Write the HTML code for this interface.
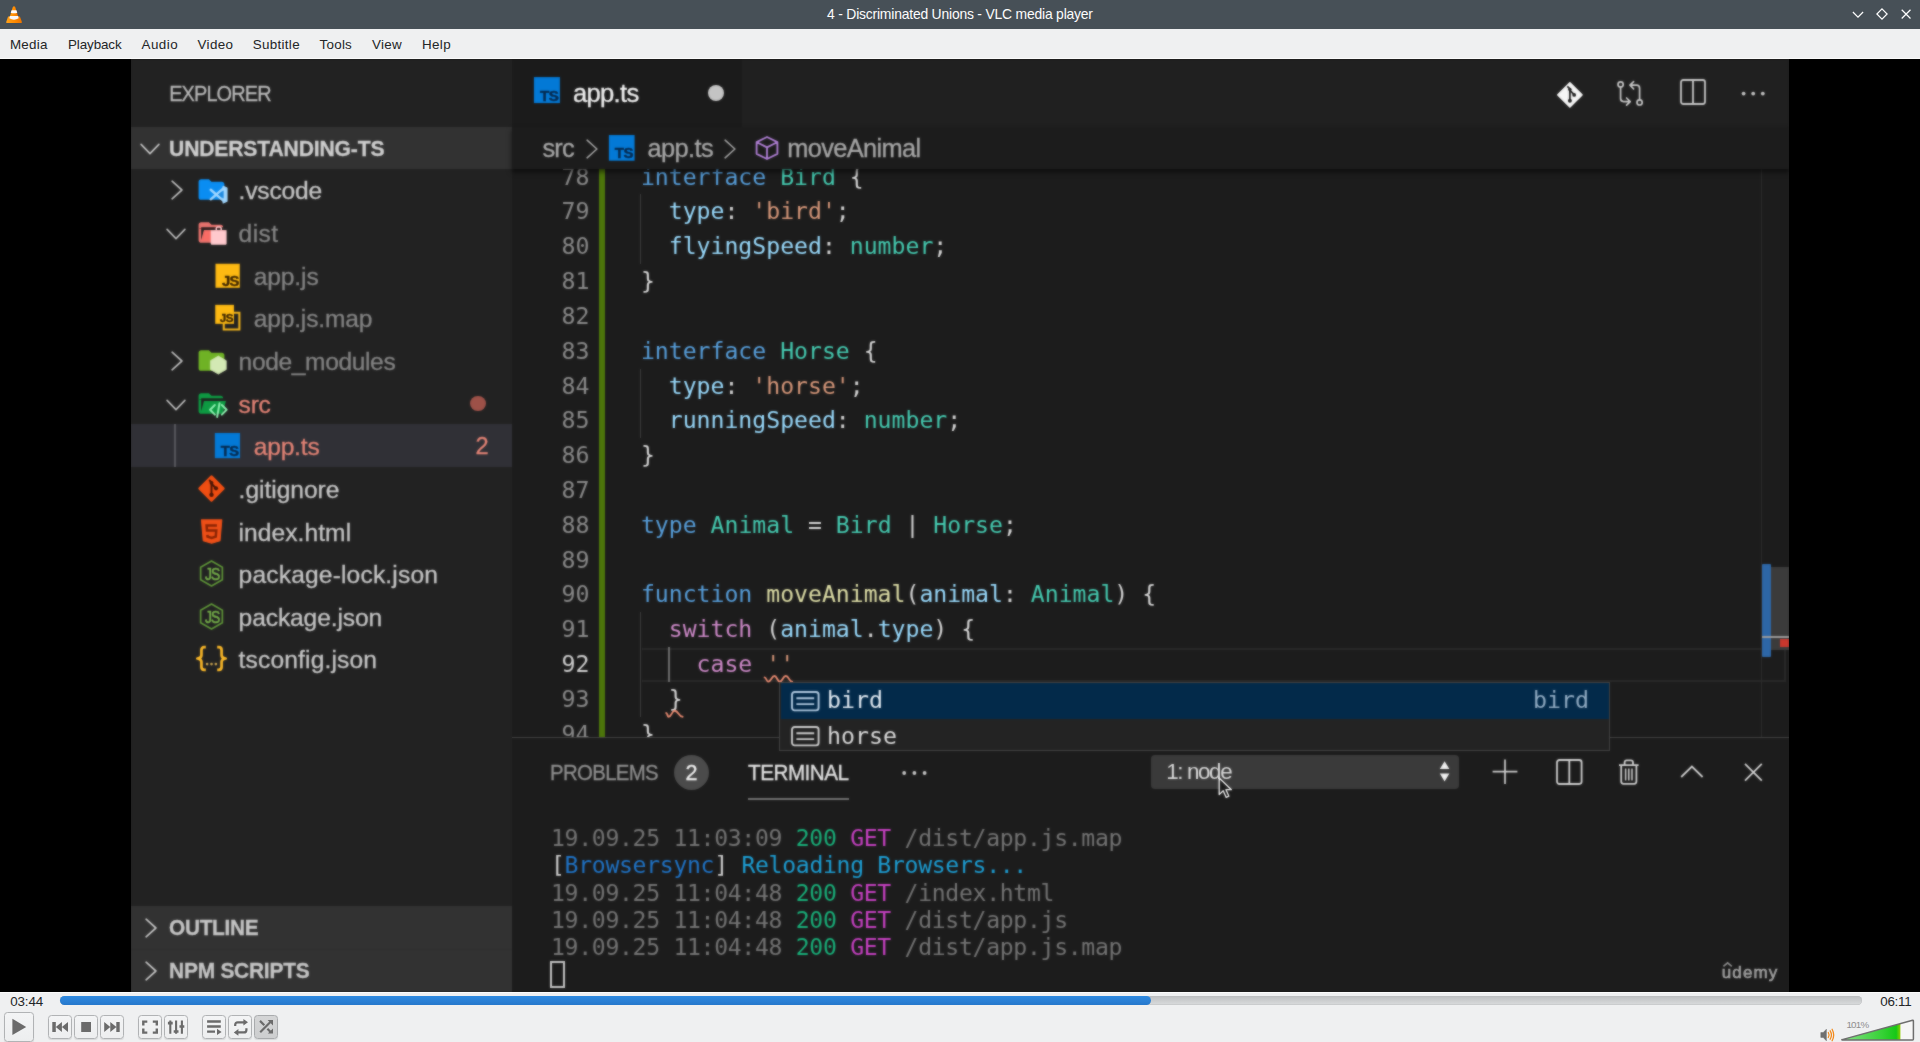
<!DOCTYPE html>
<html lang="en">
<head>
<meta charset="utf-8">
<title>4 - Discriminated Unions - VLC media player</title>
<style>
html,body{margin:0;padding:0}
body{width:1920px;height:1042px;overflow:hidden;background:#eff0f1;position:relative;font-family:"Liberation Sans",sans-serif}
.t{position:absolute;white-space:pre;display:block}
.ls{font-family:"Liberation Sans",sans-serif}
.dm{font-family:"DejaVu Sans Mono","Liberation Mono",monospace}
.ds{font-family:"DejaVu Sans","Liberation Sans",sans-serif}
svg{overflow:visible}
#vscode{filter:url(#vblur)}
#vscode .ls{-webkit-text-stroke:.3px}
.tl{position:absolute;left:551px;height:27.2px;line-height:27.2px;font-family:"DejaVu Sans Mono","Liberation Mono",monospace;font-size:23.1px;letter-spacing:-0.306px;white-space:pre}
.ln{position:absolute;left:0;width:1277px;height:34.82px;line-height:34.82px;font-family:"DejaVu Sans Mono","Liberation Mono",monospace;font-size:23.13px;white-space:pre;padding-left:128.9px;box-sizing:border-box}
.ln .no{position:absolute;left:0;width:77.4px;text-align:right;font-size:23.26px}
</style>
</head>
<body>
<svg width="0" height="0" style="position:absolute" aria-hidden="true"><filter id="vblur" x="0" y="0" width="100%" height="100%" color-interpolation-filters="sRGB"><feGaussianBlur stdDeviation="0.9" result="b"/><feComposite in="b" in2="SourceGraphic" operator="arithmetic" k1="0" k2="0.6" k3="0.4" k4="0"/></filter></svg>
<div id="titlebar" style="position:absolute;left:0;top:0;width:1920px;height:29px;background:#475057"></div>
<svg style="position:absolute;left:6px;top:5.5px;" width="16" height="17" viewBox="0 0 16 17"><defs><linearGradient id="cg" x1="0" x2="1"><stop offset="0" stop-color="#ffa21a"/><stop offset=".55" stop-color="#ff8a00"/><stop offset="1" stop-color="#ea7200"/></linearGradient></defs>
<path d="M2.1 10.5 L13.9 10.5 L15.9 16.1 Q16.1 17 15.2 17 L0.9 17 Q0 17 0.2 16.1Z" fill="url(#cg)"/>
<path d="M6.8 0.9 Q8 -0.3 9.2 0.9 L12.6 12 Q8 14.8 3.4 12Z" fill="url(#cg)"/>
<path d="M5.6 4.2 L10.4 4.2 L11.3 6.8 Q8 7.8 4.7 6.8Z" fill="#fbfbfb"/>
<path d="M3.9 9.9 L12.1 9.9 L12.7 12.3 Q8 15.2 3.3 12.3Z" fill="#f7f7f7"/></svg>
<span class="t ls" style="left:827.00px;top:5.48px;font-size:13.9px;line-height:18px;color:#fcfcfc;letter-spacing:-0.192px;">4 - Discriminated Unions - VLC media player</span>
<svg style="position:absolute;left:1848px;top:4px;" width="20" height="20" viewBox="0 0 20 20"><path d="M4.9 8 L10 13.1 L15.1 8" fill="none" stroke="#fcfcfc" stroke-width="1.25"/></svg>
<svg style="position:absolute;left:1872px;top:4px;" width="20" height="20" viewBox="0 0 20 20"><path d="M10 4.9 L15.1 10 L10 15.1 L4.9 10Z" fill="none" stroke="#fcfcfc" stroke-width="1.25"/></svg>
<svg style="position:absolute;left:1896px;top:4px;" width="20" height="20" viewBox="0 0 20 20"><path d="M5.7 5.7 L14.5 14.5 M14.5 5.7 L5.7 14.5" fill="none" stroke="#fcfcfc" stroke-width="1.25"/></svg>
<div id="menubar" style="position:absolute;left:0;top:29px;width:1920px;height:30px;background:#eff0f1;border-bottom:1px solid #fafafa;box-sizing:border-box"></div>
<span class="t ls" style="left:9.90px;top:35.96px;font-size:13.4px;line-height:17px;color:#232627;letter-spacing:0.282px;">Media</span>
<span class="t ls" style="left:68.00px;top:35.96px;font-size:13.4px;line-height:17px;color:#232627;letter-spacing:-0.105px;">Playback</span>
<span class="t ls" style="left:141.60px;top:35.96px;font-size:13.4px;line-height:17px;color:#232627;letter-spacing:0.438px;">Audio</span>
<span class="t ls" style="left:197.60px;top:35.96px;font-size:13.4px;line-height:17px;color:#232627;letter-spacing:0.323px;">Video</span>
<span class="t ls" style="left:252.70px;top:35.96px;font-size:13.4px;line-height:17px;color:#232627;letter-spacing:0.319px;">Subtitle</span>
<span class="t ls" style="left:319.60px;top:35.96px;font-size:13.4px;line-height:17px;color:#232627;letter-spacing:0.235px;">Tools</span>
<span class="t ls" style="left:371.90px;top:35.96px;font-size:13.4px;line-height:17px;color:#232627;letter-spacing:0.306px;">View</span>
<span class="t ls" style="left:422.00px;top:35.96px;font-size:13.4px;line-height:17px;color:#232627;letter-spacing:0.353px;">Help</span>
<div id="video" style="position:absolute;left:0;top:59px;width:1920px;height:933px;background:#000"></div>
<div id="vscode-clip" style="position:absolute;left:131px;top:59px;width:1658px;height:933px;overflow:hidden;background:#1c1c1c"><div id="vscode" style="position:absolute;left:-131px;top:-59px;width:1920px;height:1042px">
<div id="editor-bg" style="position:absolute;left:512px;top:59px;width:1277px;height:933px;background:#1c1c1c"></div>
<div id="sidebar" style="position:absolute;left:131px;top:59px;width:381px;height:933px;background:#222222"></div>
<span class="t ls" style="left:168.80px;top:78.64px;font-size:22.4px;line-height:29px;color:#b9b9b9;letter-spacing:-0.977px;transform-origin:1.50px 50%;transform:scaleX(0.8896);">EXPLORER</span>
<div style="position:absolute;left:131px;top:127px;width:381px;height:42px;background:#323232;"></div>
<svg style="position:absolute;left:138.4px;top:137.2px;" width="24" height="24" viewBox="0 0 24 24"><path d="M3.10 7.40 L12 16.60 L20.90 7.40" fill="none" stroke="#c2c2c2" stroke-width="1.7" stroke-linecap="round" stroke-linejoin="round"/></svg>
<span class="t ls" style="left:168.90px;top:134.92px;font-size:21.6px;line-height:28px;color:#cfcfcf;font-weight:700;letter-spacing:-0.169px;transform-origin:1.40px 50%;transform:scaleX(0.9787);">UNDERSTANDING-TS</span>
<div style="position:absolute;left:131px;top:424.2px;width:381px;height:42.8px;background:#303036;"></div>
<div style="position:absolute;left:173.6px;top:424.2px;width:2.2px;height:42.8px;background:#56565c;"></div>
<svg style="position:absolute;left:164.6px;top:178.32px;" width="24" height="24" viewBox="0 0 24 24"><path d="M7.10 3.20 L16.90 12 L7.10 20.80" fill="none" stroke="#b8b8b8" stroke-width="1.7" stroke-linecap="round" stroke-linejoin="round"/></svg>
<svg style="position:absolute;left:196.1px;top:174.42px;" width="31.0" height="31.0" viewBox="0 0 24 24"><path d="M10 4H4c-1.11 0-2 .89-2 2v12a2 2 0 0 0 2 2h16a2 2 0 0 0 2-2V8c0-1.11-.9-2-2-2h-8l-2-2z" fill="#0a8df2"/><path d="M11.4 12.2 L21.6 21 M11.4 19.6 L21.6 10.8" fill="none" stroke="#9fd6ff" stroke-width="1.9" stroke-linecap="round"/><path d="M21 9.6 L24 10.8 V21 L21 22.4 Z" fill="#9fd6ff" stroke="#9fd6ff" stroke-width=".9" stroke-linejoin="round"/><path d="M21.4 12.8 L17 15.9 L21.4 19Z" fill="#1f8ae0"/></svg>
<span class="t ls" style="left:238.60px;top:175.40px;font-size:24.6px;line-height:32px;color:#c8c8c8;letter-spacing:-0.210px;">.vscode</span>
<svg style="position:absolute;left:163.6px;top:222.16px;" width="24" height="24" viewBox="0 0 24 24"><path d="M3.10 7.40 L12 16.60 L20.90 7.40" fill="none" stroke="#b8b8b8" stroke-width="1.7" stroke-linecap="round" stroke-linejoin="round"/></svg>
<svg style="position:absolute;left:196.1px;top:217.06px;" width="31.0" height="31.0" viewBox="0 0 24 24"><path d="M19 20H4c-1.11 0-2-.9-2-2V6c0-1.11.89-2 2-2h6l2 2h7a2 2 0 0 1 2 2H4v10l2.14-8h17.07l-2.28 8.5c-.23.87-1.01 1.5-1.93 1.5z" fill="#e8726d"/><path d="M2.6 9.2 H19.6 V8.6 H2.6Z" fill="#5a1010" opacity=".55"/><path d="M4.2 18.2 L6.2 10.4 H14 V18.2Z" fill="#ff6a62" opacity=".7"/><path d="M11.4 10.2 h12.3 v10.6 a.6 .6 0 0 1 -.6 .6 h-11.1 a.6 .6 0 0 1 -.6 -.6z" fill="#ffc9cd"/><path d="M15.7 10.4 v-1.5 a1.1 1.1 0 0 1 1.1 -1.1 h1.6 a1.1 1.1 0 0 1 1.1 1.1 v1.5" fill="none" stroke="#ffc9cd" stroke-width="1.2"/></svg>
<span class="t ls" style="left:238.60px;top:218.04px;font-size:24.6px;line-height:32px;color:#858585;letter-spacing:0.376px;">dist</span>
<svg style="position:absolute;left:211.5px;top:259.7px;" width="31.0" height="31.0" viewBox="0 0 24 24"><rect x="2.7" y="2.9" width="18.8" height="18.6" fill="#fdb912"/><text x="20.6" y="20" text-anchor="end" font-family="Liberation Sans, sans-serif" font-weight="700" font-size="11.4" fill="#3a2300" stroke="#3a2300" stroke-width=".3" letter-spacing="-.5">JS</text></svg>
<span class="t ls" style="left:253.70px;top:260.68px;font-size:24.6px;line-height:32px;color:#858585;letter-spacing:-0.125px;">app.js</span>
<svg style="position:absolute;left:211.5px;top:302.34px;" width="31.0" height="31.0" viewBox="0 0 24 24"><path d="M12 8.3 H21.2 V21.3 H9.1 V14" fill="none" stroke="#f3b51a" stroke-width="1.6"/><rect x="2.5" y="2.2" width="14.5" height="14.7" fill="#fdb912"/><text x="16.2" y="15.4" text-anchor="end" font-family="Liberation Sans, sans-serif" font-weight="700" font-size="9" fill="#3a2300" stroke="#3a2300" stroke-width=".25" letter-spacing="-.4">JS</text></svg>
<span class="t ls" style="left:253.70px;top:303.32px;font-size:24.6px;line-height:32px;color:#858585;letter-spacing:-0.178px;">app.js.map</span>
<svg style="position:absolute;left:164.6px;top:348.88px;" width="24" height="24" viewBox="0 0 24 24"><path d="M7.10 3.20 L16.90 12 L7.10 20.80" fill="none" stroke="#b8b8b8" stroke-width="1.7" stroke-linecap="round" stroke-linejoin="round"/></svg>
<svg style="position:absolute;left:196.1px;top:344.98px;" width="31.0" height="31.0" viewBox="0 0 24 24"><path d="M10 4H4c-1.11 0-2 .89-2 2v12a2 2 0 0 0 2 2h16a2 2 0 0 0 2-2V8c0-1.11-.9-2-2-2h-8l-2-2z" fill="#6fb225"/><path d="M17.3 8.6 L23.4 12.1 V19 L17.3 22.5 L11.2 19 V12.1Z" fill="#d3e9b4" stroke="#d3e9b4" stroke-width=".6" stroke-linejoin="round"/></svg>
<span class="t ls" style="left:238.60px;top:345.96px;font-size:24.6px;line-height:32px;color:#858585;letter-spacing:-0.386px;">node_modules</span>
<svg style="position:absolute;left:163.6px;top:392.71999999999997px;" width="24" height="24" viewBox="0 0 24 24"><path d="M3.10 7.40 L12 16.60 L20.90 7.40" fill="none" stroke="#b8b8b8" stroke-width="1.7" stroke-linecap="round" stroke-linejoin="round"/></svg>
<svg style="position:absolute;left:196.1px;top:387.62px;" width="31.0" height="31.0" viewBox="0 0 24 24"><path d="M19 20H4c-1.11 0-2-.9-2-2V6c0-1.11.89-2 2-2h6l2 2h7a2 2 0 0 1 2 2H4v10l2.14-8h17.07l-2.28 8.5c-.23.87-1.01 1.5-1.93 1.5z" fill="#0d9a42"/><path d="M2.6 9.2 H19.6 V8.6 H2.6Z" fill="#033b16" opacity=".6"/><path d="M14.6 13.2 L10.9 16.9 L14.6 20.6 M20 13.2 L23.7 16.9 L20 20.6 M18.2 11.8 L16.4 22.4" fill="none" stroke="#8df0b0" stroke-width="1.55" stroke-linecap="round" stroke-linejoin="round"/></svg>
<span class="t ls" style="left:238.60px;top:388.60px;font-size:24.6px;line-height:32px;color:#e58476;letter-spacing:-0.242px;">src</span>
<svg style="position:absolute;left:211.5px;top:430.26px;" width="31.0" height="31.0" viewBox="0 0 24 24"><rect x="2.2" y="2.3" width="19.5" height="19.5" fill="#0379d6"/><text x="20.7" y="19.9" text-anchor="end" font-family="Liberation Sans, sans-serif" font-weight="700" font-size="11.4" fill="#06294d" stroke="#06294d" stroke-width=".35" letter-spacing="-.3">TS</text></svg>
<span class="t ls" style="left:253.70px;top:431.24px;font-size:24.6px;line-height:32px;color:#e58476;letter-spacing:-0.199px;">app.ts</span>
<svg style="position:absolute;left:196.1px;top:472.9px;" width="31.0" height="31.0" viewBox="0 0 24 24"><path d="M12 2.9 L21.1 12 L12 21.1 L2.9 12Z" fill="#f04e12" stroke="#f04e12" stroke-width="2.2" stroke-linejoin="round"/><path d="M10.2 5.4 L12 7.2 V16.4 M12.2 8.4 L15 11.4" fill="none" stroke="#4a1505" stroke-width="1.5"/><circle cx="12" cy="16.9" r="1.7" fill="#4a1505"/><circle cx="15.5" cy="11.9" r="1.6" fill="#4a1505"/><circle cx="12" cy="7.6" r="1.5" fill="#4a1505"/></svg>
<span class="t ls" style="left:238.60px;top:473.88px;font-size:24.6px;line-height:32px;color:#c8c8c8;letter-spacing:-0.041px;">.gitignore</span>
<svg style="position:absolute;left:196.1px;top:515.54px;" width="31.0" height="31.0" viewBox="0 0 24 24"><path d="M4.2 3 H20 L18.6 19.2 L12.1 21.1 L5.6 19.2Z" fill="#ee4f17" stroke="#ee4f17" stroke-width=".8" stroke-linejoin="round"/><path d="M16.2 7.4 H8.2 L8.5 11.3 H15.7 L15.3 16 L12.1 17 L8.9 16 L8.8 14.6" fill="none" stroke="#8a2404" stroke-width="1.9"/></svg>
<span class="t ls" style="left:238.60px;top:516.52px;font-size:24.6px;line-height:32px;color:#c8c8c8;letter-spacing:0.046px;">index.html</span>
<svg style="position:absolute;left:196.1px;top:558.18px;" width="31.0" height="31.0" viewBox="0 0 24 24"><path d="M12 2.4 L20.4 7.2 V16.8 L12 21.6 L3.6 16.8 V7.2Z" fill="none" stroke="#5f9638" stroke-width="1.3" stroke-linejoin="round"/><text transform="translate(12.5 17) scale(.84 1)" text-anchor="middle" font-family="Liberation Sans, sans-serif" font-weight="400" font-size="12.8" fill="#76b04a" letter-spacing="-.9" stroke="#76b04a" stroke-width=".45">JS</text></svg>
<span class="t ls" style="left:238.60px;top:559.16px;font-size:24.6px;line-height:32px;color:#c8c8c8;letter-spacing:0.153px;">package-lock.json</span>
<svg style="position:absolute;left:196.1px;top:600.82px;" width="31.0" height="31.0" viewBox="0 0 24 24"><path d="M12 2.4 L20.4 7.2 V16.8 L12 21.6 L3.6 16.8 V7.2Z" fill="none" stroke="#5f9638" stroke-width="1.3" stroke-linejoin="round"/><text transform="translate(12.5 17) scale(.84 1)" text-anchor="middle" font-family="Liberation Sans, sans-serif" font-weight="400" font-size="12.8" fill="#76b04a" letter-spacing="-.9" stroke="#76b04a" stroke-width=".45">JS</text></svg>
<span class="t ls" style="left:238.60px;top:601.80px;font-size:24.6px;line-height:32px;color:#c8c8c8;letter-spacing:-0.121px;">package.json</span>
<svg style="position:absolute;left:196.1px;top:643.46px;" width="31.0" height="31.0" viewBox="0 0 24 24"><path d="M7.6 3.2 H6.4 Q4.2 3.2 4.2 5.4 V9.4 Q4.2 11.6 1 12 Q4.2 12.4 4.2 14.6 V18.6 Q4.2 20.8 6.4 20.8 H7.6" fill="none" stroke="#fbb827" stroke-width="2.1" stroke-linejoin="round"/><path d="M16.4 3.2 H17.6 Q19.8 3.2 19.8 5.4 V9.4 Q19.8 11.6 23 12 Q19.8 12.4 19.8 14.6 V18.6 Q19.8 20.8 17.6 20.8 H16.4" fill="none" stroke="#fbb827" stroke-width="2.1" stroke-linejoin="round"/><circle cx="8.6" cy="16.3" r="1.05" fill="#d0a850"/><circle cx="12" cy="16.3" r="1.05" fill="#d0a850"/><circle cx="15.4" cy="16.3" r="1.05" fill="#d0a850"/></svg>
<span class="t ls" style="left:238.60px;top:644.44px;font-size:24.6px;line-height:32px;color:#c8c8c8;letter-spacing:0.141px;">tsconfig.json</span>
<div style="position:absolute;left:470.3px;top:395.8px;width:15.6px;height:15.6px;border-radius:50%;background:#9d5148"></div>
<span class="t ls" style="left:475.40px;top:430.88px;font-size:23.6px;line-height:31px;color:#e58476;">2</span>
<div style="position:absolute;left:131px;top:906px;width:381px;height:86px;background:#323232;"></div>
<div style="position:absolute;left:131px;top:948.8px;width:381px;height:1px;background:#2f2f2f;"></div>
<svg style="position:absolute;left:139.4px;top:916.2px;" width="24" height="24" viewBox="0 0 24 24"><path d="M7.10 3.20 L16.90 12 L7.10 20.80" fill="none" stroke="#c2c2c2" stroke-width="1.7" stroke-linecap="round" stroke-linejoin="round"/></svg>
<span class="t ls" style="left:168.90px;top:914.12px;font-size:21.6px;line-height:28px;color:#c6c6c6;font-weight:700;letter-spacing:-0.301px;transform-origin:1.40px 50%;transform:scaleX(0.9639);">OUTLINE</span>
<svg style="position:absolute;left:139.4px;top:959.3px;" width="24" height="24" viewBox="0 0 24 24"><path d="M7.10 3.20 L16.90 12 L7.10 20.80" fill="none" stroke="#c2c2c2" stroke-width="1.7" stroke-linecap="round" stroke-linejoin="round"/></svg>
<span class="t ls" style="left:168.90px;top:957.32px;font-size:21.6px;line-height:28px;color:#c6c6c6;font-weight:700;letter-spacing:-0.244px;transform-origin:1.40px 50%;transform:scaleX(0.9688);">NPM SCRIPTS</span>
<div id="tabs" style="position:absolute;left:512px;top:59px;width:1277px;height:68px;background:#202020"></div>
<div id="tab-active" style="position:absolute;left:512px;top:59px;width:230.4px;height:68px;background:#1b1b1b"></div>
<svg style="position:absolute;left:530.6px;top:74.4px;" width="32" height="32" viewBox="0 0 24 24"><rect x="2.2" y="2.3" width="19.5" height="19.5" fill="#0379d6"/><text x="20.7" y="19.9" text-anchor="end" font-family="Liberation Sans, sans-serif" font-weight="700" font-size="11.4" fill="#06294d" stroke="#06294d" stroke-width=".35" letter-spacing="-.3">TS</text></svg>
<span class="t ls" style="left:573.00px;top:76.53px;font-size:25.6px;line-height:33px;color:#f2f2f2;letter-spacing:-0.704px;">app.ts</span>
<div style="position:absolute;left:707.5px;top:84.9px;width:16.2px;height:16.2px;border-radius:50%;background:#c4c4c4"></div>
<svg style="position:absolute;left:1556.4px;top:81.2px;" width="27.8" height="27.8" viewBox="0 0 24 24"><path d="M12 1.6 L22.4 12 L12 22.4 L1.6 12Z" fill="#f6f6f6" stroke="#f6f6f6" stroke-width="1.4" stroke-linejoin="round"/><path d="M9.8 4.6 L12 6.8 V16.4 M12.2 8.2 L15.2 11.4" fill="none" stroke="#1c1c1c" stroke-width="1.5"/><circle cx="12" cy="17" r="1.7" fill="#1c1c1c"/><circle cx="15.7" cy="12" r="1.6" fill="#1c1c1c"/><circle cx="12" cy="7.4" r="1.5" fill="#1c1c1c"/></svg>
<svg style="position:absolute;left:1616.6px;top:79.6px;" width="26.2" height="27" viewBox="0 0 26.2 27"><circle cx="3.6" cy="4.4" r="2.6" fill="none" stroke="#c8c8c8" stroke-width="1.7"/><circle cx="22.6" cy="22.4" r="2.6" fill="none" stroke="#c8c8c8" stroke-width="1.7"/><path d="M3.6 7.2 V18.6 Q3.6 21.6 6.6 21.6 H12.6 M9.6 18 L13.2 21.6 L9.6 25.2" fill="none" stroke="#c8c8c8" stroke-width="1.7" stroke-linejoin="round" stroke-linecap="round"/><path d="M22.6 19.6 V8.2 Q22.6 5.2 19.6 5.2 H13.6 M16.6 1.6 L13 5.2 L16.6 8.8" fill="none" stroke="#c8c8c8" stroke-width="1.7" stroke-linejoin="round" stroke-linecap="round"/></svg>
<svg style="position:absolute;left:1680px;top:79.2px;" width="26" height="26" viewBox="0 0 26 26"><rect x="1" y="1" width="24" height="24" rx="2.2" fill="none" stroke="#c8c8c8" stroke-width="1.8"/><path d="M13 1 V25" stroke="#c8c8c8" stroke-width="1.8"/></svg>
<svg style="position:absolute;left:1741px;top:90px;" width="26" height="8" viewBox="0 0 26 8"><circle cx="2.6" cy="3.6" r="1.9" fill="#c8c8c8"/><circle cx="12.2" cy="3.6" r="1.9" fill="#c8c8c8"/><circle cx="21.8" cy="3.6" r="1.9" fill="#c8c8c8"/></svg>
<div id="code" style="position:absolute;left:512px;top:127px;width:1277px;height:610px;overflow:hidden;background:#1c1c1c">
<div style="position:absolute;left:130px;top:521px;width:1144px;height:34px;box-sizing:border-box;border:2px solid #282828;border-left:0"></div>
<div style="position:absolute;left:128.20000000000005px;top:67.4px;width:1.3px;height:69.64px;background:#3c3c3c"></div>
<div style="position:absolute;left:128.20000000000005px;top:241.5px;width:1.3px;height:69.64px;background:#3c3c3c"></div>
<div style="position:absolute;left:128.20000000000005px;top:485.24px;width:1.3px;height:104.46000000000001px;background:#3c3c3c"></div>
<div style="position:absolute;left:155.60000000000002px;top:520.0600000000001px;width:2px;height:34.82px;background:#6c6c6c"></div>
<div style="position:absolute;left:87px;top:42px;width:6.3px;height:570px;background:#4c750a"></div>
<div class="ln" style="top:32.58px"><span class="no" style="color:#8a8a8a">78</span><span style="color:#579fdc">interface</span><span style="color:#d8d8d8"> </span><span style="color:#45ccb2">Bird</span><span style="color:#d8d8d8"> {</span></div>
<div class="ln" style="top:67.40px"><span class="no" style="color:#8a8a8a">79</span><span style="color:#d8d8d8">  </span><span style="color:#9adcff">type</span><span style="color:#d8d8d8">: </span><span style="color:#d8987a">&#x27;bird&#x27;</span><span style="color:#d8d8d8">;</span></div>
<div class="ln" style="top:102.22px"><span class="no" style="color:#8a8a8a">80</span><span style="color:#d8d8d8">  </span><span style="color:#9adcff">flyingSpeed</span><span style="color:#d8d8d8">: </span><span style="color:#45ccb2">number</span><span style="color:#d8d8d8">;</span></div>
<div class="ln" style="top:137.04px"><span class="no" style="color:#8a8a8a">81</span><span style="color:#d8d8d8">}</span></div>
<div class="ln" style="top:171.86px"><span class="no" style="color:#8a8a8a">82</span></div>
<div class="ln" style="top:206.68px"><span class="no" style="color:#8a8a8a">83</span><span style="color:#579fdc">interface</span><span style="color:#d8d8d8"> </span><span style="color:#45ccb2">Horse</span><span style="color:#d8d8d8"> {</span></div>
<div class="ln" style="top:241.50px"><span class="no" style="color:#8a8a8a">84</span><span style="color:#d8d8d8">  </span><span style="color:#9adcff">type</span><span style="color:#d8d8d8">: </span><span style="color:#d8987a">&#x27;horse&#x27;</span><span style="color:#d8d8d8">;</span></div>
<div class="ln" style="top:276.32px"><span class="no" style="color:#8a8a8a">85</span><span style="color:#d8d8d8">  </span><span style="color:#9adcff">runningSpeed</span><span style="color:#d8d8d8">: </span><span style="color:#45ccb2">number</span><span style="color:#d8d8d8">;</span></div>
<div class="ln" style="top:311.14px"><span class="no" style="color:#8a8a8a">86</span><span style="color:#d8d8d8">}</span></div>
<div class="ln" style="top:345.96px"><span class="no" style="color:#8a8a8a">87</span></div>
<div class="ln" style="top:380.78px"><span class="no" style="color:#8a8a8a">88</span><span style="color:#579fdc">type</span><span style="color:#d8d8d8"> </span><span style="color:#45ccb2">Animal</span><span style="color:#d8d8d8"> = </span><span style="color:#45ccb2">Bird</span><span style="color:#d8d8d8"> | </span><span style="color:#45ccb2">Horse</span><span style="color:#d8d8d8">;</span></div>
<div class="ln" style="top:415.60px"><span class="no" style="color:#8a8a8a">89</span></div>
<div class="ln" style="top:450.42px"><span class="no" style="color:#8a8a8a">90</span><span style="color:#579fdc">function</span><span style="color:#d8d8d8"> </span><span style="color:#e0e0a8">moveAnimal</span><span style="color:#d8d8d8">(</span><span style="color:#9adcff">animal</span><span style="color:#d8d8d8">: </span><span style="color:#45ccb2">Animal</span><span style="color:#d8d8d8">) {</span></div>
<div class="ln" style="top:485.24px"><span class="no" style="color:#8a8a8a">91</span><span style="color:#d8d8d8">  </span><span style="color:#cf8aca">switch</span><span style="color:#d8d8d8"> (</span><span style="color:#9adcff">animal</span><span style="color:#d8d8d8">.</span><span style="color:#9adcff">type</span><span style="color:#d8d8d8">) {</span></div>
<div class="ln" style="top:520.06px"><span class="no" style="color:#d0d0d0">92</span><span style="color:#d8d8d8">    </span><span style="color:#cf8aca">case</span><span style="color:#d8d8d8"> </span><span style="color:#d8987a">&#x27;&#x27;</span></div>
<div class="ln" style="top:554.88px"><span class="no" style="color:#8a8a8a">93</span><span style="color:#d8d8d8">  }</span></div>
<div class="ln" style="top:589.70px"><span class="no" style="color:#8a8a8a">94</span><span style="color:#d8d8d8">}</span></div>
<div style="position:absolute;left:-512px;top:-127px;width:0;height:0"><svg style="position:absolute;left:0;top:0" width="1" height="1"><path d="M764.6 677.4 C766.4 677.4 766.4 681.6 768.2 681.6 C771.4 681.6 771.4 676.0 774.5 676.0 C777.1 676.0 777.1 681.6 779.8 681.6 C782.8 681.6 782.8 676.0 785.8 676.0 C789.0 676.0 789.0 681.8 792.2 681.8" fill="none" stroke="#e88a70" stroke-width="1.9" stroke-linejoin="round" stroke-linecap="round"/></svg><svg style="position:absolute;left:0;top:0" width="1" height="1"><path d="M666.2 713.0 C667.4 713.0 667.4 716.8 668.6 716.8 C671.6 716.8 671.6 710.8 674.6 710.8 C678.6 710.8 678.6 716.8 682.6 716.8" fill="none" stroke="#e88a70" stroke-width="1.9" stroke-linejoin="round" stroke-linecap="round"/></svg></div>
<div style="position:absolute;left:1249px;top:42px;width:1px;height:570px;background:#2b2b2b"></div>
<div style="position:absolute;left:1259.2px;top:440px;width:18px;height:83px;background:#3b3b3b"></div>
<div style="position:absolute;left:1249.6px;top:437.4px;width:9.6px;height:92.6px;background:#2d66a6;border-radius:1px"></div>
<div style="position:absolute;left:1250px;top:508.79999999999995px;width:27px;height:1.8px;background:#9a9a9a"></div>
<div style="position:absolute;left:1267.6px;top:511.79999999999995px;width:9.4px;height:8.6px;background:#c8372d"></div>
</div>
<div id="breadcrumbs" style="position:absolute;left:512px;top:127px;width:1277px;height:42px;background:#1c1c1c;box-shadow:0 3px 5px 0 rgba(0,0,0,.55)"></div>
<span class="t ls" style="left:542.50px;top:132.10px;font-size:25.4px;line-height:33px;color:#a8a8a8;letter-spacing:-0.823px;">src</span>
<svg style="position:absolute;left:579.6px;top:136.6px;" width="24" height="24" viewBox="0 0 24 24"><path d="M7.10 3.20 L16.90 12 L7.10 20.80" fill="none" stroke="#a0a0a0" stroke-width="1.6" stroke-linecap="round" stroke-linejoin="round"/></svg>
<svg style="position:absolute;left:605.6px;top:132.4px;" width="31.6" height="31.6" viewBox="0 0 24 24"><rect x="2.2" y="2.3" width="19.5" height="19.5" fill="#0379d6"/><text x="20.7" y="19.9" text-anchor="end" font-family="Liberation Sans, sans-serif" font-weight="700" font-size="11.4" fill="#06294d" stroke="#06294d" stroke-width=".35" letter-spacing="-.3">TS</text></svg>
<span class="t ls" style="left:647.60px;top:132.10px;font-size:25.4px;line-height:33px;color:#a8a8a8;letter-spacing:-0.633px;">app.ts</span>
<svg style="position:absolute;left:718.2px;top:136.6px;" width="24" height="24" viewBox="0 0 24 24"><path d="M7.10 3.20 L16.90 12 L7.10 20.80" fill="none" stroke="#a0a0a0" stroke-width="1.6" stroke-linecap="round" stroke-linejoin="round"/></svg>
<svg style="position:absolute;left:753.6px;top:133.6px;" width="26" height="28" viewBox="0 0 24 24"><path d="M12 1.8 L21.6 6.6 V17.4 L12 22.2 L2.4 17.4 V6.6Z M2.6 6.7 L12 11.4 L21.4 6.7 M12 11.4 V22" fill="none" stroke="#b07fd6" stroke-width="1.7" stroke-linejoin="round"/></svg>
<span class="t ls" style="left:787.20px;top:132.10px;font-size:25.4px;line-height:33px;color:#a8a8a8;letter-spacing:-0.633px;">moveAnimal</span>
<div id="panel" style="position:absolute;left:512px;top:737px;width:1277px;height:255px;background:#1c1c1c;border-top:1.6px solid #414141;box-sizing:border-box"></div>
<span class="t ls" style="left:549.80px;top:757.81px;font-size:22.2px;line-height:29px;color:#8f8f8f;letter-spacing:-0.735px;transform-origin:1.40px 50%;transform:scaleX(0.9191);">PROBLEMS</span>
<div class="badge" style="position:absolute;left:674.3px;top:755.2px;width:35px;height:35px;border-radius:50%;background:#4b4b4b"></div>
<span class="t ls" style="left:685.40px;top:759.12px;font-size:21.6px;line-height:28px;color:#f2f2f2;">2</span>
<span class="t ls" style="left:747.60px;top:757.81px;font-size:22.2px;line-height:29px;color:#e4e4e4;letter-spacing:-0.559px;transform-origin:1.00px 50%;transform:scaleX(0.9329);">TERMINAL</span>
<div style="position:absolute;left:748.4px;top:798.2px;width:100.4px;height:1.5px;background:#6e6e6e;"></div>
<svg style="position:absolute;left:900px;top:769px;" width="30" height="8" viewBox="0 0 30 8"><circle cx="4.2" cy="4" r="1.9" fill="#c8c8c8"/><circle cx="14.4" cy="4" r="1.9" fill="#c8c8c8"/><circle cx="24.6" cy="4" r="1.9" fill="#c8c8c8"/></svg>
<div id="termsel" style="position:absolute;left:1150.6px;top:754.8px;width:308.6px;height:33.8px;border-radius:4px;background:#3a3a3a"></div>
<span class="t ls" style="left:1166.20px;top:756.94px;font-size:22.4px;line-height:29px;color:#dcdcdc;letter-spacing:-1.384px;-webkit-text-stroke:0;">1: node</span>
<svg style="position:absolute;left:1436.6px;top:760.4px;" width="16" height="24" viewBox="0 0 16 24"><path d="M7.6 1.2 L12.4 9 H2.8Z M7.6 21.4 L12.4 13.6 H2.8Z" fill="#f0f0f0"/></svg>
<svg style="position:absolute;left:1490px;top:757px;" width="30" height="30" viewBox="0 0 30 30"><path d="M15 2.4 V27 M2.6 14.7 H27.4" stroke="#d0d0d0" stroke-width="1.7" fill="none"/></svg>
<svg style="position:absolute;left:1555.6px;top:758.6px;" width="27" height="27" viewBox="0 0 27 27"><rect x="1" y="1" width="24.6" height="24" rx="2.4" fill="none" stroke="#d0d0d0" stroke-width="1.8"/><path d="M13.3 1 V25" stroke="#d0d0d0" stroke-width="1.8"/></svg>
<svg style="position:absolute;left:1617.6px;top:758.8px;" width="22" height="26" viewBox="0 0 22 26"><path d="M1 6.2 H20.6 M6.6 5.8 V3.6 Q6.6 1.4 8.8 1.4 H12.8 Q15 1.4 15 3.6 V5.8" fill="none" stroke="#d0d0d0" stroke-width="1.8"/><path d="M3.2 6.4 V22.6 Q3.2 24.8 5.4 24.8 H16.2 Q18.4 24.8 18.4 22.6 V6.4" fill="none" stroke="#d0d0d0" stroke-width="1.8"/><path d="M7.6 9.6 V21.4 M10.8 9.6 V21.4 M14 9.6 V21.4" fill="none" stroke="#d0d0d0" stroke-width="1.5"/></svg>
<svg style="position:absolute;left:1679px;top:762px;" width="26" height="18" viewBox="0 0 26 18"><path d="M2.2 15 L12.9 4.6 L23.6 15" fill="none" stroke="#d0d0d0" stroke-width="1.8"/></svg>
<svg style="position:absolute;left:1742px;top:761px;" width="22" height="22" viewBox="0 0 22 22"><path d="M3 2.8 L19.8 19.6 M19.8 2.8 L3 19.6" fill="none" stroke="#d0d0d0" stroke-width="1.8"/></svg>
<div class="tl" style="top:825.11px"><span style="color:#747474">19.09.25 11:03:09 </span><span style="color:#18b07a">200</span><span style="color:#747474"> </span><span style="color:#c640c2">GET</span><span style="color:#747474"> /dist/app.js.map</span></div>
<div class="tl" style="top:852.41px"><span style="color:#d0d0d0">[</span><span style="color:#1f74c8">Browsersync</span><span style="color:#d0d0d0">] </span><span style="color:#1c9ed4">Reloading Browsers...</span></div>
<div class="tl" style="top:879.61px"><span style="color:#747474">19.09.25 11:04:48 </span><span style="color:#18b07a">200</span><span style="color:#747474"> </span><span style="color:#c640c2">GET</span><span style="color:#747474"> /index.html</span></div>
<div class="tl" style="top:906.81px"><span style="color:#747474">19.09.25 11:04:48 </span><span style="color:#18b07a">200</span><span style="color:#747474"> </span><span style="color:#c640c2">GET</span><span style="color:#747474"> /dist/app.js</span></div>
<div class="tl" style="top:934.01px"><span style="color:#747474">19.09.25 11:04:48 </span><span style="color:#18b07a">200</span><span style="color:#747474"> </span><span style="color:#c640c2">GET</span><span style="color:#747474"> /dist/app.js.map</span></div>
<div id="termcursor" style="position:absolute;left:550.4px;top:960.6px;width:14.4px;height:27.2px;box-sizing:border-box;border:2.3px solid #c4c4c4"></div>
<span class="t ls" style="left:1721.80px;top:961.61px;font-size:17.0px;line-height:22px;color:rgba(255,255,255,.5);letter-spacing:1.094px;-webkit-text-stroke:.55px;">udemy</span>
<svg style="position:absolute;left:1720px;top:958px;" width="16" height="12" viewBox="0 0 16 12"><path d="M3.4 8.3 L7.6 4.8 L11.8 8.3" fill="none" stroke="rgba(255,255,255,.5)" stroke-width="1.7" stroke-linejoin="miter"/></svg>
<div id="suggest" style="position:absolute;left:779.4px;top:681.8px;width:830.6px;height:69.6px;box-sizing:border-box;background:#232323;border:1.4px solid #414141"></div>
<div id="suggest-sel" style="position:absolute;left:780.6px;top:683.2px;width:828.2px;height:35.8px;background:#032a4a"></div>
<svg style="position:absolute;left:791.4px;top:690.8px;" width="28.6" height="20.4" viewBox="0 0 28.6 20.4"><rect x="1" y="1" width="26.6" height="18.4" rx="2.6" fill="none" stroke="#b4cce2" stroke-width="1.9"/><path d="M5.4 7.3 H23.2 M5.4 13.1 H23.2" stroke="#b4cce2" stroke-width="1.9" fill="none"/></svg>
<svg style="position:absolute;left:791.4px;top:726.2px;" width="28.6" height="20.4" viewBox="0 0 28.6 20.4"><rect x="1" y="1" width="26.6" height="18.4" rx="2.6" fill="none" stroke="#cfcfcf" stroke-width="1.9"/><path d="M5.4 7.3 H23.2 M5.4 13.1 H23.2" stroke="#cfcfcf" stroke-width="1.9" fill="none"/></svg>
<span class="t dm" style="left:827.00px;top:685.25px;font-size:23.26px;line-height:30px;color:#e4ecf4;">bird</span>
<span class="t dm" style="left:827.00px;top:720.75px;font-size:23.26px;line-height:30px;color:#dcdcdc;">horse</span>
<span class="t dm" style="left:1533.00px;top:685.25px;font-size:23.26px;line-height:30px;color:#93adc4;">bird</span>
<svg style="position:absolute;left:1218.4px;top:777.4px;" width="15" height="22" viewBox="0 0 15 22"><path d="M1.2 1 V17.6 L5.2 13.8 L8.2 20.4 L10.9 19.2 L8 12.7 H13.4Z" fill="#1a1a1a" stroke="#f4f4f4" stroke-width="1.3" stroke-linejoin="round"/></svg>
</div></div>
<div id="controls" style="position:absolute;left:0;top:992px;width:1920px;height:50px;background:#eff0f1;border-top:1px solid #fbfbfb;box-sizing:border-box"></div>
<span class="t ls" style="left:10.30px;top:992.96px;font-size:13.4px;line-height:17px;color:#232627;letter-spacing:-0.177px;">03:44</span>
<span class="t ls" style="left:1880.20px;top:992.96px;font-size:13.4px;line-height:17px;color:#232627;letter-spacing:-0.229px;">06:11</span>
<div id="seek" style="position:absolute;left:59.5px;top:996px;width:1802.4px;height:9px;border-radius:4.5px;background:linear-gradient(#bdbfc1,#dadcdd);box-shadow:inset 0 0 0 .5px #bbbdbf"></div>
<div id="seekfill" style="position:absolute;left:59.5px;top:996px;width:1091px;height:9px;border-radius:4.5px;background:linear-gradient(#2f8ae0,#2a7fd4 60%,#2678cc)"></div>
<div class="vbtn" style="position:absolute;left:4px;top:1012px;width:30px;height:29.5px;box-sizing:border-box;border:1px solid #b1b3b5;border-radius:3.5px;background:linear-gradient(#f3f4f5,#edeeef);box-shadow:0 1px 1px rgba(0,0,0,.10)"><svg width="28" height="27.5" viewBox="0 0 28 27.5" style="display:block"><path d="M7.4 5.8 L21.2 13.9 L7.4 22Z" fill="#6b6b6b"/></svg></div>
<div class="vbtn" style="position:absolute;left:48px;top:1015px;width:24px;height:24px;box-sizing:border-box;border:1px solid #b1b3b5;border-radius:3.5px;background:linear-gradient(#f3f4f5,#edeeef);box-shadow:0 1px 1px rgba(0,0,0,.10)"><svg width="22" height="22" viewBox="0 0 22 22" style="display:block"><path d="M3.3 6 h3.5 v10 h-3.5z M12.9 6 v10 L6.8 11z M19 6 v10 L12.9 11z" fill="#6b6b6b"/></svg></div>
<div class="vbtn" style="position:absolute;left:74px;top:1015px;width:24px;height:24px;box-sizing:border-box;border:1px solid #b1b3b5;border-radius:3.5px;background:linear-gradient(#f3f4f5,#edeeef);box-shadow:0 1px 1px rgba(0,0,0,.10)"><svg width="22" height="22" viewBox="0 0 22 22" style="display:block"><path d="M6.2 6 h9.8 v10 h-9.8z" fill="#6b6b6b"/></svg></div>
<div class="vbtn" style="position:absolute;left:100px;top:1015px;width:24px;height:24px;box-sizing:border-box;border:1px solid #b1b3b5;border-radius:3.5px;background:linear-gradient(#f3f4f5,#edeeef);box-shadow:0 1px 1px rgba(0,0,0,.10)"><svg width="22" height="22" viewBox="0 0 22 22" style="display:block"><path d="M3.2 6 v10 L9.3 11z M9.3 6 v10 L15.4 11z M15.3 6 h3.4 v10 h-3.4z" fill="#6b6b6b"/></svg></div>
<div class="vbtn" style="position:absolute;left:138px;top:1015px;width:24px;height:24px;box-sizing:border-box;border:1px solid #b1b3b5;border-radius:3.5px;background:linear-gradient(#f3f4f5,#edeeef);box-shadow:0 1px 1px rgba(0,0,0,.10)"><svg width="22" height="22" viewBox="0 0 22 22" style="display:block"><path d="M4.3 9.6 V5.6 H8.3 M13.8 5.6 H17.8 V9.6 M17.8 12.6 V16.6 H13.8 M8.3 16.6 H4.3 V12.6" fill="none" stroke="#6b6b6b" stroke-width="2.4"/></svg></div>
<div class="vbtn" style="position:absolute;left:164px;top:1015px;width:24px;height:24px;box-sizing:border-box;border:1px solid #b1b3b5;border-radius:3.5px;background:linear-gradient(#f3f4f5,#edeeef);box-shadow:0 1px 1px rgba(0,0,0,.10)"><svg width="22" height="22" viewBox="0 0 22 22" style="display:block"><path d="M5.3 4.4 V17.7 M11.1 4.4 V17.7 M16.9 4.4 V17.7" fill="none" stroke="#6b6b6b" stroke-width="2.1"/><path d="M2.9 5.8 h4.8 v2.6 h-4.8z M8.7 14.2 h4.8 v2.6 h-4.8z M14.5 9.2 h4.8 v2.6 h-4.8z" fill="#6b6b6b"/></svg></div>
<div class="vbtn" style="position:absolute;left:202px;top:1015px;width:24px;height:24px;box-sizing:border-box;border:1px solid #b1b3b5;border-radius:3.5px;background:linear-gradient(#f3f4f5,#edeeef);box-shadow:0 1px 1px rgba(0,0,0,.10)"><svg width="22" height="22" viewBox="0 0 22 22" style="display:block"><path d="M4.1 5.5 H17.8 M4.1 10.5 H17.8 M4.1 15.6 H12" fill="none" stroke="#6b6b6b" stroke-width="2.3"/><path d="M14 12.8 L18.6 15.9 L14 19Z" fill="#6b6b6b"/></svg></div>
<div class="vbtn" style="position:absolute;left:228px;top:1015px;width:24px;height:24px;box-sizing:border-box;border:1px solid #b1b3b5;border-radius:3.5px;background:linear-gradient(#f3f4f5,#edeeef);box-shadow:0 1px 1px rgba(0,0,0,.10)"><svg width="22" height="22" viewBox="0 0 22 22" style="display:block"><path d="M6.2 10 V8.8 Q6.2 6.3 8.7 6.3 H15 M17.4 12.2 V13.9 Q17.4 16.4 14.9 16.4 H8.6" fill="none" stroke="#6b6b6b" stroke-width="2.2"/><path d="M14.4 3 L19 6.3 L14.4 9.6Z M9.4 13.1 L4.8 16.4 L9.4 19.7Z" fill="#6b6b6b"/></svg></div>
<div class="vbtn" style="position:absolute;left:254px;top:1015px;width:24px;height:24px;box-sizing:border-box;border:1px solid #a9abad;border-radius:3.5px;background:linear-gradient(#d4d5d6,#cdcecf);box-shadow:0 1px 1px rgba(0,0,0,.10)"><svg width="22" height="22" viewBox="0 0 22 22" style="display:block"><path d="M5 4.9 L9.3 9.2 M5.2 16.2 L15.4 6 M12.4 12.8 L15.6 16" fill="none" stroke="#6b6b6b" stroke-width="2.2"/><path d="M12.6 4 H18 V9.4Z M18 12.4 V17.6 H12.8Z" fill="#6b6b6b"/></svg></div>
<svg style="position:absolute;left:1819.6px;top:1028.2px;" width="16" height="14" viewBox="0 0 16 14"><path d="M0.8 4.6 H3.2 L6.4 1.2 V12.8 L3.2 9.4 H0.8Z" fill="#707070" stroke="#707070" stroke-width=".5" stroke-linejoin="round"/>
<path d="M8.3 4.5 Q9.9 7 8.3 9.5 M10.2 2.8 Q12.7 7 10.2 11.2 M12.1 1.2 Q15.3 7 12.1 12.8" fill="none" stroke="#f38b1f" stroke-width="1.3" stroke-linecap="round"/></svg>
<svg style="position:absolute;left:1841px;top:1019px;" width="74" height="23" viewBox="0 0 74 23"><defs><linearGradient id="vg" gradientUnits="userSpaceOnUse" x1="0" y1="0" x2="59.4" y2="0"><stop offset="0" stop-color="#8ae08a"/><stop offset=".7" stop-color="#35d135"/><stop offset=".93" stop-color="#16c816"/><stop offset="1" stop-color="#8fd000"/></linearGradient>
<clipPath id="vc"><rect x="0" y="0" width="59.4" height="23"/></clipPath></defs>
<path d="M1.2 20.6 L71.6 1.2 Q72.4 1 72.4 1.9 V20 Q72.4 20.9 71.6 20.9 H1.4Z" fill="#f6f6f6"/>
<path d="M1.2 20.6 L71.6 1.2 Q72.4 1 72.4 1.9 V20 Q72.4 20.9 71.6 20.9 H1.4Z" fill="url(#vg)" clip-path="url(#vc)"/>
<path d="M1.2 20.6 L71.6 1.2 Q72.4 1 72.4 1.9 V20 Q72.4 20.9 71.6 20.9 H1.4Q0.4 20.8 1.2 20.6Z" fill="none" stroke="#6f6f6f" stroke-width="1.5" stroke-linejoin="round"/></svg>
<span class="t ls" style="left:1846.40px;top:1018.00px;font-size:9.8px;line-height:13px;color:#8e8e8e;letter-spacing:-0.719px;">101%</span>
</body>
</html>
